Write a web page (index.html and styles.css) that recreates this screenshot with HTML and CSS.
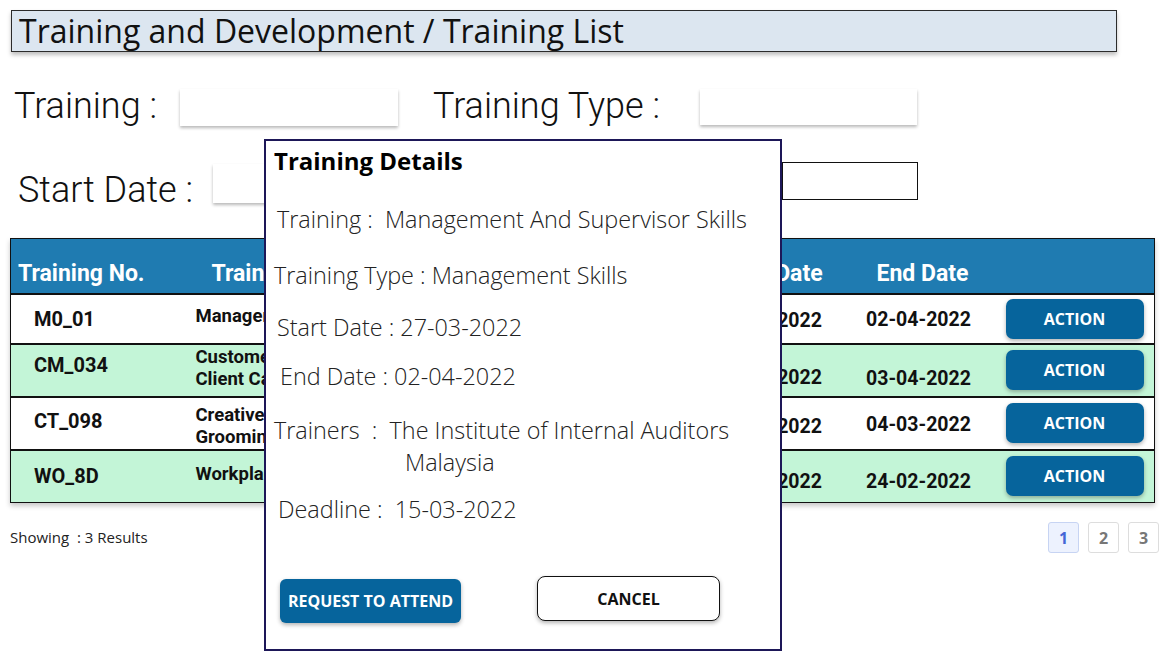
FILE: index.html
```html
<!DOCTYPE html>
<html>
<head>
<meta charset="utf-8">
<link rel="stylesheet" href="styles.css">
</head>
<body>
<div class="page">
  <div class="crumb">Training and Development / Training List</div>

  <div class="filters">
    <div class="frow r1">
      <span class="flabel l1">Training :</span>
      <span class="finput i1"></span>
      <span class="flabel l2">Training Type :</span>
      <span class="finput i2"></span>
    </div>
    <div class="frow r2">
      <span class="flabel l3">Start Date :</span>
      <span class="finput i3"></span>
      <span class="flabel l4"></span>
      <span class="finput i4 bordered"></span>
    </div>
  </div>

  <table class="grid">
    <colgroup>
      <col class="c-no"><col class="c-name"><col class="c-tr"><col class="c-sd"><col class="c-ed"><col class="c-act">
    </colgroup>
    <thead>
      <tr>
        <th class="h-no">Training No.</th>
        <th class="h-name">Training</th>
        <th class="h-tr"></th>
        <th class="h-sd">Start Date</th>
        <th class="h-ed">End Date</th>
        <th></th>
      </tr>
    </thead>
    <tbody>
      <tr class="w row1">
        <td class="no">M0_01</td>
        <td class="name">Management Skills</td>
        <td class="tr"></td>
        <td class="sd">27-03-2022</td>
        <td class="ed">02-04-2022</td>
        <td class="act"><span class="btn-act">ACTION</span></td>
      </tr>
      <tr class="g row2">
        <td class="no">CM_034</td>
        <td class="name">Customer Service &amp;<br>Client Care</td>
        <td class="tr"></td>
        <td class="sd">28-03-2022</td>
        <td class="ed">03-04-2022</td>
        <td class="act"><span class="btn-act">ACTION</span></td>
      </tr>
      <tr class="w row3">
        <td class="no">CT_098</td>
        <td class="name">Creative Image &amp;<br>Grooming</td>
        <td class="tr"></td>
        <td class="sd">01-03-2022</td>
        <td class="ed">04-03-2022</td>
        <td class="act"><span class="btn-act">ACTION</span></td>
      </tr>
      <tr class="g row4">
        <td class="no">WO_8D</td>
        <td class="name">Workplace Safety</td>
        <td class="tr"></td>
        <td class="sd">20-02-2022</td>
        <td class="ed">24-02-2022</td>
        <td class="act"><span class="btn-act">ACTION</span></td>
      </tr>
    </tbody>
  </table>

  <div class="foot">
    <span class="showing">Showing &nbsp;: 3 Results</span>
    <div class="pager">
      <span class="pg on">1</span>
      <span class="pg">2</span>
      <span class="pg">3</span>
    </div>
  </div>
</div>

<div class="modal">
  <h2 class="m-title">Training Details</h2>
  <p class="m-line m-train">Training :&nbsp; Management And Supervisor Skills</p>
  <p class="m-line m-type">Training Type : Management Skills</p>
  <p class="m-line m-sd">Start Date : 27-03-2022</p>
  <p class="m-line m-ed">End Date : 02-04-2022</p>
  <p class="m-line m-trn">Trainers &nbsp;:&nbsp; The Institute of Internal Auditors<br><span class="m-indent">Malaysia</span></p>
  <p class="m-line m-dl">Deadline :&nbsp; 15-03-2022</p>
  <div class="m-actions">
    <span class="btn-req">REQUEST TO ATTEND</span>
    <span class="btn-cancel">CANCEL</span>
  </div>
</div>
</body>
</html>
```

FILE: styles.css
```css
html, body {
  margin: 0;
  padding: 0;
  background: #ffffff;
}
body {
  width: 1168px;
  height: 666px;
  overflow: hidden;
  position: relative;
  font-family: "Open Sans", "Liberation Sans", sans-serif;
  color: #000;
}
.page {
  padding: 10px 0 0 0;
}
.crumb {
  margin-left: 11px;
  height: 40px;
  border: 1px solid #2b2b2b;
  background: #dce6f0;
  box-shadow: 0 3px 4px rgba(0,0,0,0.25);
  font-family: "Open Sans", sans-serif;
  font-size: 32px;
  line-height: 40px;
  padding-left: 7px;
  box-sizing: content-box;
  width: 1097px;
  color: #111;
  white-space: nowrap;
}

.filters {
  margin-top: 34px;
}
.frow {
  display: flex;
  align-items: center;
}
.flabel {
  font-family: "Roboto", sans-serif;
  font-weight: 300;
  font-size: 36px;
  color: #111;
  white-space: nowrap;
}
.finput {
  display: block;
  background: #fff;
  box-shadow: 0 2px 3px rgba(0,0,0,0.28);
}
.r1 { height: 40px; }
.l1 { margin-left: 14px; width: 166px; }
.i1 { width: 218px; height: 37px; margin-top: 2px; }
.l2 { margin-left: 35px; width: 267px; }
.i2 { width: 217px; height: 36px; margin-top: 2px; }

.r2 { height: 40px; margin-top: 37px; }
.l3 { margin-left: 18px; width: 195px; margin-top: 14px; }
.i3 { width: 220px; height: 39px; }
.l4 { width: 0; }
.i4 { width: 134px; height: 36px; margin-left: 349px; margin-top: -5px; }
.finput.bordered {
  border: 1px solid #111;
  box-shadow: none;
}

.grid {
  margin: 35px 0 0 10px;
  width: 1144px;
  border-collapse: collapse;
  table-layout: fixed;
  border: 1px solid #111;
  box-shadow: 0 3px 5px rgba(0,0,0,0.22);
  font-family: "Roboto", sans-serif;
}
.c-no { width: 175px; }
.c-name { width: 200px; }
.c-tr { width: 315px; }
.c-sd { width: 150px; }
.c-ed { width: 140px; }
.c-act { width: 164px; }

.grid thead tr {
  background: #1f7bb1;
  height: 55px;
}
.grid th {
  color: #fff;
  font-weight: 700;
  font-size: 23px;
  text-align: left;
  padding: 15px 0 0 0;
  white-space: nowrap;
  overflow: hidden;
}
.h-no { padding-left: 7px !important; }
.h-name { padding-left: 26px !important; }
.h-sd { text-align: center !important; padding-right: 10px !important; }
.h-ed { text-align: center !important; padding-left: 4px !important; }

.grid tbody tr {
  height: 53px;
  border-top: 2px solid #111;
}
.grid tbody tr.row1 { height: 50px; }
.grid tbody tr.w { background: #ffffff; }
.grid tbody tr.g { background: #c3f5d7; }
.grid td {
  padding: 0;
  vertical-align: middle;
  color: #111;
  font-weight: 700;
}
.no {
  padding-left: 23px !important;
  font-size: 20px;
}
.row2 .no { padding-bottom: 10px !important; }
.row3 .no { padding-bottom: 4px !important; }
.name {
  padding-left: 10px !important;
  font-size: 18.5px;
  line-height: 22px;
  white-space: nowrap;
  overflow: hidden;
  padding-bottom: 5px !important;
}
.row2 .name { padding-bottom: 5px !important; }
.row3 .name { padding-bottom: 0 !important; padding-top: 5px !important; }
.sd, .ed {
  font-size: 19.5px;
  text-align: center;
}
.sd { padding-right: 12px !important; }
.ed { padding-right: 4px !important; }
.row1 .sd { padding-top: 3px !important; }
.row1 .ed { padding-top: 2px !important; }
.row2 .sd { padding-top: 14px !important; }
.row2 .ed { padding-top: 16px !important; }
.row3 .sd { padding-top: 6px !important; }
.row3 .ed { padding-top: 2px !important; }
.row4 .sd { padding-top: 10px !important; }
.row4 .ed { padding-top: 10px !important; }
.act {
  text-align: left;
  padding-left: 15px !important;
}
.btn-act {
  display: inline-flex;
  align-items: center;
  justify-content: center;
  width: 138px;
  height: 40px;
  border-radius: 7px;
  background: #06649c;
  color: #fff;
  font-family: "Open Sans", sans-serif;
  font-weight: 700;
  font-size: 16px;
  box-shadow: 0 2px 4px rgba(0,0,0,0.3);
}

.foot {
  display: flex;
  justify-content: space-between;
  align-items: center;
  margin-top: 19px;
  padding: 0 10px 0 10px;
}
.showing {
  font-size: 15px;
  color: #222;
  margin-top: -2px;
}
.pager {
  display: flex;
  gap: 9px;
  margin-right: -1px;
}
.pg {
  display: flex;
  align-items: center;
  justify-content: center;
  width: 29px;
  height: 29px;
  border: 1px solid #dddddd;
  border-radius: 3px;
  font-weight: 700;
  font-size: 16px;
  color: #777;
  background: #fff;
}
.pg.on {
  background: #edf2fe;
  border-color: #c7d4f3;
  color: #4566d6;
}

.modal {
  position: absolute;
  left: 264px;
  top: 139px;
  width: 514px;
  height: 508px;
  border: 2px solid #1d1758;
  background: #fff;
  font-family: "Open Sans", sans-serif;
}
.m-title {
  margin: 5px 0 0 8px;
  font-size: 24px;
  font-weight: 700;
  line-height: 30px;
}
.m-line {
  margin: 0;
  font-size: 23.4px;
  font-weight: 300;
  line-height: 32px;
  color: #222;
  white-space: nowrap;
}
.m-train { margin: 27px 0 0 11px; }
.m-type { margin: 24px 0 0 8px; }
.m-sd { margin: 20px 0 0 11px; }
.m-ed { margin: 17px 0 0 14px; }
.m-trn { margin: 22px 0 0 8px; }
.m-indent { padding-left: 131px; }
.m-dl { margin: 15px 0 0 12px; }
.m-actions {
  display: flex;
  align-items: flex-start;
  margin: 51px 0 0 14px;
}
.btn-req {
  display: flex;
  align-items: center;
  justify-content: center;
  width: 181px;
  height: 44px;
  margin-top: 3px;
  border-radius: 6px;
  background: #06649c;
  color: #fff;
  font-weight: 700;
  font-size: 16px;
  box-shadow: 0 2px 4px rgba(0,0,0,0.3);
}
.btn-cancel {
  display: flex;
  align-items: center;
  justify-content: center;
  width: 181px;
  height: 43px;
  margin-left: 76px;
  border: 1px solid #111;
  border-radius: 8px;
  background: #fff;
  color: #111;
  font-weight: 700;
  font-size: 16px;
  box-shadow: 0 2px 4px rgba(0,0,0,0.3);
}
```
